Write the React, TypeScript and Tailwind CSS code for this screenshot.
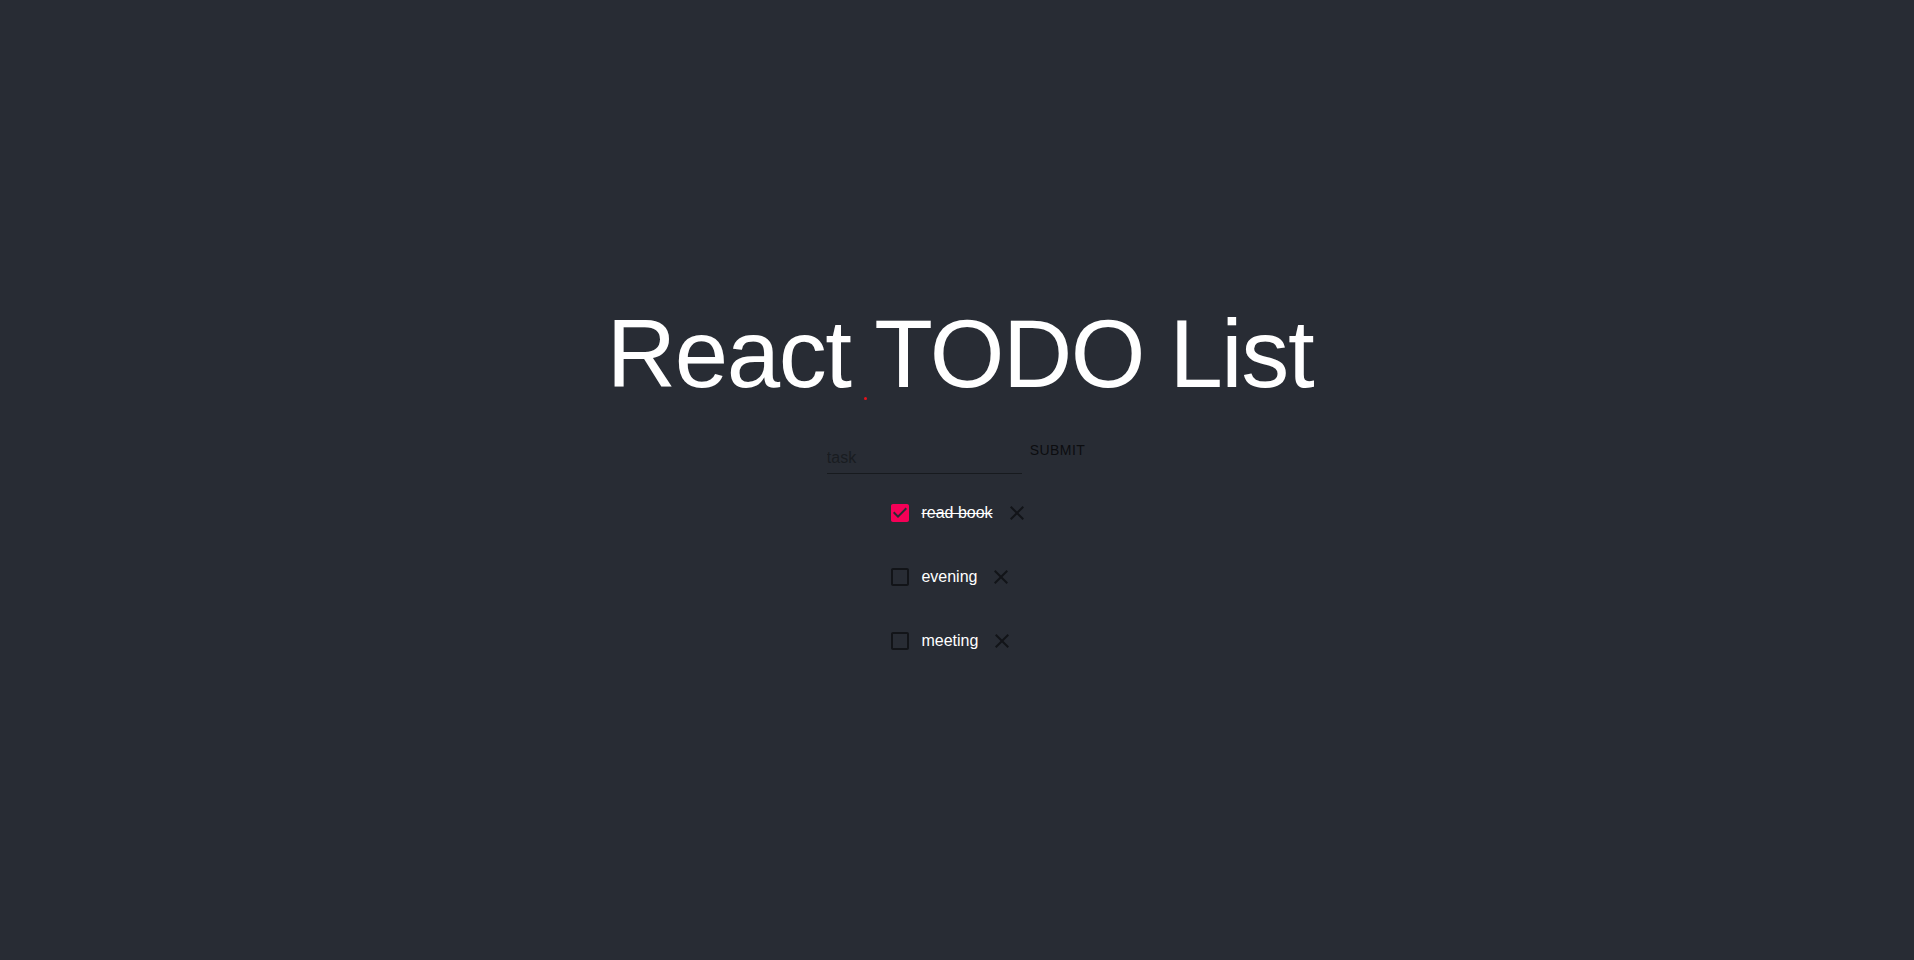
import React from 'react';

// MUI-style icon paths
const CHECKED = 'M19 3H5c-1.11 0-2 .9-2 2v14c0 1.1.89 2 2 2h14c1.11 0 2-.9 2-2V5c0-1.1-.89-2-2-2zm-9 14l-5-5 1.41-1.41L10 14.17l7.59-7.59L19 8l-9 9z';
const BLANK = 'M19 5v14H5V5h14m0-2H5c-1.1 0-2 .9-2 2v14c0 1.1.9 2 2 2h14c1.1 0 2-.9 2-2V5c0-1.1-.9-2-2-2z';
const CLOSE = 'M19 6.41L17.59 5 12 10.59 6.41 5 5 6.41 10.59 12 5 17.59 6.41 19 12 13.41 17.59 19 19 17.59 13.41 12z';

interface Todo {
  id: number;
  text: string;
  done: boolean;
}

const initialTodos: Todo[] = [
  { id: 1, text: 'read book', done: true },
  { id: 2, text: 'evening', done: false },
  { id: 3, text: 'meeting', done: false },
];

function Icon({ d, className }: { d: string; className?: string }) {
  return (
    <svg viewBox="0 0 24 24" className={className} fill="currentColor">
      <path d={d} />
    </svg>
  );
}

function TodoRow({
  todo,
  onToggle,
  onRemove,
}: {
  todo: Todo;
  onToggle: (id: number) => void;
  onRemove: (id: number) => void;
}) {
  return (
    <div className="flex items-center h-12">
      <button onClick={() => onToggle(todo.id)} className="p-[9px]">
        <Icon
          d={todo.done ? CHECKED : BLANK}
          className={todo.done ? 'h-6 w-6 text-[#f50057]' : 'h-6 w-6 text-[#121418]'}
        />
      </button>
      <span className={todo.done ? 'text-white text-base line-through' : 'text-white text-base'}>
        {todo.text}
      </span>
      <button onClick={() => onRemove(todo.id)} className="p-3">
        <Icon d={CLOSE} className="h-6 w-6 text-[#121418]" />
      </button>
    </div>
  );
}

export default function App() {
  const [todos, setTodos] = React.useState<Todo[]>(initialTodos);
  const [task, setTask] = React.useState('');

  const toggle = (id: number) =>
    setTodos(prev => prev.map(t => (t.id === id ? { ...t, done: !t.done } : t)));
  const remove = (id: number) => setTodos(prev => prev.filter(t => t.id !== id));

  const submit = (e: React.FormEvent) => {
    e.preventDefault();
    if (!task.trim()) return;
    setTodos(prev => [...prev, { id: Date.now(), text: task, done: false }]);
    setTask('');
  };

  return (
    <div className="min-h-screen bg-[#282c34] flex flex-col items-center pt-[300px] pl-[6px] font-['Liberation_Sans',Arial,sans-serif]">
      <h1 className="relative text-[96px] leading-[107px] tracking-[-1.4px] text-white">
        React TODO List
        <span className="absolute left-[257px] top-[97px] h-[3px] w-[3px] rounded-full bg-[#e8121b]" />
      </h1>

      <form onSubmit={submit} className="flex items-start mt-[26px]">
        <div className="w-[195px] mt-[9px] border-b border-[#171a1e]">
          <input
            value={task}
            onChange={e => setTask(e.target.value)}
            placeholder="task"
            className="w-full bg-transparent pt-[6px] pb-[6px] text-base leading-[19px] text-black/90 placeholder:text-[#191c21] outline-none"
          />
        </div>
        <button
          type="submit"
          className="min-w-16 px-2 pt-[5px] pb-[7px] text-sm leading-[24px] font-normal tracking-[0.4px] uppercase text-[#0c0d10]"
        >
          Submit
        </button>
      </form>

      <div className="flex flex-col items-start gap-4 mt-[15px]">
        {todos.map(todo => (
          <TodoRow key={todo.id} todo={todo} onToggle={toggle} onRemove={remove} />
        ))}
      </div>
    </div>
  );
}
